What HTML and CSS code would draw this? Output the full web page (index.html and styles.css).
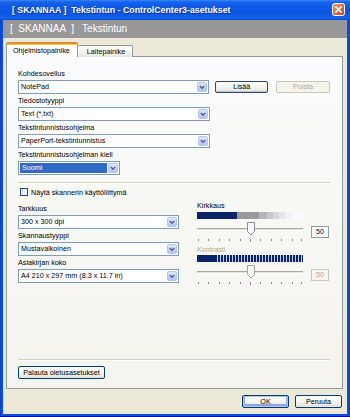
FILE: index.html
```html
<!DOCTYPE html>
<html>
<head>
<meta charset="utf-8">
<link rel="stylesheet" href="styles.css">
</head>
<body>
<div class="window">
  <div class="titlebar">
    <span class="title">[ SKANNAA ]  Tekstintun - ControlCenter3-asetukset</span>
    <span class="close"><svg width="13" height="13" viewBox="0 0 13 13"><defs><linearGradient id="cg" x1="0" y1="0" x2="1" y2="1"><stop offset="0" stop-color="#F0A585"/><stop offset="0.5" stop-color="#E06A3C"/><stop offset="1" stop-color="#C5461C"/></linearGradient></defs><rect x="0.5" y="0.5" width="12" height="12" rx="2" fill="url(#cg)" stroke="#fff"/><path d="M3.8 3.8 L9.2 9.2 M9.2 3.8 L3.8 9.2" stroke="#fff" stroke-width="1.7" stroke-linecap="round"/></svg></span>
  </div>
  <div class="client">
    <div class="header">[  SKANNAA  ]   Tekstintun</div>
    <div class="tabs">
      <div class="tab active">Ohjelmistopainike</div>
      <div class="tab">Laitepainike</div>
    </div>
    <div class="panel">
      <div class="field">
        <div class="label">Kohdesovellus</div>
        <div class="row">
          <div class="combo wide"><span class="value">NotePad</span><span class="arrow"><svg width="9" height="10" viewBox="0 0 9 10"><path d="M2 3.8 L4.5 6.3 L7 3.8" fill="none" stroke="#4D6185" stroke-width="1.6"/></svg></span></div>
          <button class="btn add">Lisää</button>
          <button class="btn del" disabled>Poista</button>
        </div>
      </div>
      <div class="field">
        <div class="label">Tiedostotyyppi</div>
        <div class="combo wide"><span class="value">Text (*.txt)</span><span class="arrow"><svg width="9" height="10" viewBox="0 0 9 10"><path d="M2 3.8 L4.5 6.3 L7 3.8" fill="none" stroke="#4D6185" stroke-width="1.6"/></svg></span></div>
      </div>
      <div class="field">
        <div class="label">Tekstintunnistusohjelma</div>
        <div class="combo wide"><span class="value">PaperPort-tekstintunnistus</span><span class="arrow"><svg width="9" height="10" viewBox="0 0 9 10"><path d="M2 3.8 L4.5 6.3 L7 3.8" fill="none" stroke="#4D6185" stroke-width="1.6"/></svg></span></div>
      </div>
      <div class="field">
        <div class="label">Tekstintunnistusohjelman kieli</div>
        <div class="combo lang"><span class="value selected">Suomi</span><span class="arrow"><svg width="9" height="10" viewBox="0 0 9 10"><path d="M2 3.8 L4.5 6.3 L7 3.8" fill="none" stroke="#4D6185" stroke-width="1.6"/></svg></span></div>
      </div>
      <div class="sep"></div>
      <div class="check"><span class="box"></span><span>Näytä skannerin käyttöliittymä</span></div>
      <div class="cols">
        <div class="left">
          <div class="field">
            <div class="label">Tarkkuus</div>
            <div class="combo mid"><span class="value">300 x 300 dpi</span><span class="arrow"><svg width="9" height="10" viewBox="0 0 9 10"><path d="M2 3.8 L4.5 6.3 L7 3.8" fill="none" stroke="#4D6185" stroke-width="1.6"/></svg></span></div>
          </div>
          <div class="field">
            <div class="label">Skannaustyyppi</div>
            <div class="combo mid"><span class="value">Mustavalkoinen</span><span class="arrow"><svg width="9" height="10" viewBox="0 0 9 10"><path d="M2 3.8 L4.5 6.3 L7 3.8" fill="none" stroke="#4D6185" stroke-width="1.6"/></svg></span></div>
          </div>
          <div class="field">
            <div class="label">Asiakirjan koko</div>
            <div class="combo mid"><span class="value">A4 210 x 297 mm (8.3 x 11.7 in)</span><span class="arrow"><svg width="9" height="10" viewBox="0 0 9 10"><path d="M2 3.8 L4.5 6.3 L7 3.8" fill="none" stroke="#4D6185" stroke-width="1.6"/></svg></span></div>
          </div>
        </div>
        <div class="right">
          <div class="slabel">Kirkkaus</div>
          <div class="bar bright"></div>
          <div class="srow">
            <svg class="slider" width="106" height="25" viewBox="0 0 106 25">
              <line x1="0" y1="9.5" x2="106" y2="9.5" stroke="#A7A6A0"/>
              <line x1="0" y1="10.5" x2="106" y2="10.5" stroke="#E2E1DA"/>
              <line x1="0" y1="11.5" x2="106" y2="11.5" stroke="#FFFFFF"/>
              <g fill="#8A8A8A">
                <rect x="1" y="20" width="1" height="2"/><rect x="11" y="20" width="1" height="2"/><rect x="22" y="20" width="1" height="2"/><rect x="32" y="20" width="1" height="2"/><rect x="43" y="20" width="1" height="2"/><rect x="53" y="20" width="1" height="3"/><rect x="63" y="20" width="1" height="2"/><rect x="74" y="20" width="1" height="2"/><rect x="84" y="20" width="1" height="2"/><rect x="95" y="20" width="1" height="2"/><rect x="104" y="20" width="1" height="2"/>
              </g>
              <path d="M50.5 3.5 H57.5 V12.5 L54 16 L50.5 12.5 Z" fill="#F7F7F3" stroke="#8E8F8F"/>
            </svg>
            <div class="valbox">50</div>
          </div>
          <div class="slabel disabled">Kontrasti</div>
          <div class="bar contrast"></div>
          <div class="srow">
            <svg class="slider" width="106" height="25" viewBox="0 0 106 25">
              <line x1="0" y1="9.5" x2="106" y2="9.5" stroke="#A7A6A0"/>
              <line x1="0" y1="10.5" x2="106" y2="10.5" stroke="#E2E1DA"/>
              <line x1="0" y1="11.5" x2="106" y2="11.5" stroke="#FFFFFF"/>
              <g fill="#8A8A8A">
                <rect x="1" y="20" width="1" height="2"/><rect x="11" y="20" width="1" height="2"/><rect x="22" y="20" width="1" height="2"/><rect x="32" y="20" width="1" height="2"/><rect x="43" y="20" width="1" height="2"/><rect x="53" y="20" width="1" height="3"/><rect x="63" y="20" width="1" height="2"/><rect x="74" y="20" width="1" height="2"/><rect x="84" y="20" width="1" height="2"/><rect x="95" y="20" width="1" height="2"/><rect x="104" y="20" width="1" height="2"/>
              </g>
              <path d="M50.5 3.5 H57.5 V12.5 L54 16 L50.5 12.5 Z" fill="#F7F7F3" stroke="#A3A39F"/>
            </svg>
            <div class="valbox disabled">50</div>
          </div>
        </div>
      </div>
      <div class="spacer"></div>
      <div class="sep"></div>
      <button class="btn reset">Palauta oletusasetukset</button>
    </div>
    <div class="footer">
      <button class="btn ok">OK</button>
      <button class="btn cancel">Peruuta</button>
    </div>
  </div>
</div>
</body>
</html>
```
FILE: styles.css
```css
* { box-sizing: border-box; }
html, body { margin: 0; padding: 0; }
body {
  width: 350px;
  height: 417px;
  overflow: hidden;
  font-family: "Liberation Sans", Arial, sans-serif;
  font-size: 7.2px;
  color: #000;
  background: #0B49D8;
}
.window {
  width: 350px;
  height: 417px;
  display: flex;
  flex-direction: column;
  background: linear-gradient(to right, #0A3FCC, #0C4FE0 2px, #0C4FE0 348px, #0A3FCC);
  border-bottom: 1px solid #00139A;
}
.titlebar {
  height: 20px;
  flex: none;
  display: flex;
  align-items: center;
  padding: 0 5px 0 12px;
  background: linear-gradient(to bottom, #3A86F4 0, #1563EC 2px, #0D58E6 7px, #0B55E3 13px, #1462EC 18px, #0B4FD8 20px);
  color: #fff;
}
.title {
  flex: 1;
  font-weight: bold;
  font-size: 8.8px;
  white-space: pre;
  text-shadow: 1px 1px 0 #0B2E9C;
}
.close { width: 13px; height: 13px; display: block; margin-top: -1px; }
.close svg { display: block; }
.client {
  flex: 1;
  margin: 0 3px 2px;
  background: #ECE9D8;
  display: flex;
  flex-direction: column;
}
.header {
  height: 18px;
  flex: none;
  background: #989898;
  color: #fff;
  font-size: 10px;
  line-height: 18px;
  padding-left: 7px;
  white-space: pre;
}
.tabs {
  display: flex;
  align-items: flex-end;
  height: 15px;
  margin: 4px 0 -1px 3px;
  position: relative;
  z-index: 1;
  flex: none;
}
.tab {
  height: 12px;
  width: 55px;
  border: 1px solid #919B9C;
  border-bottom: none;
  border-left: none;
  border-radius: 2px 2px 0 0;
  background: linear-gradient(#FFFFFF, #F3F3EF 60%, #E6E5DE);
  line-height: 11px;
  text-align: center;
  padding-left: 2px;
}
.tab.active {
  width: 72px;
  height: 15px;
  border-left: 1px solid #919B9C;
  border-top: 2px solid #E68B2C;
  box-shadow: inset 0 1px 0 #FFC83C;
  background: #FCFCFE;
  text-align: left;
  padding-left: 6px;
  line-height: 13px;
}
.panel {
  flex: 1;
  margin: 0 4px 0 3px;
  border: 1px solid #919B9C;
  background: linear-gradient(to bottom, #FCFCFE 0%, #F8F8F5 40%, #F4F3EE 100%);
  padding: 10px 12px 9px 11px;
  display: flex;
  flex-direction: column;
}
.label { height: 13px; line-height: 13px; white-space: nowrap; }
.row { display: flex; align-items: center; }
.combo {
  height: 14px;
  border: 1px solid #7F9DB9;
  background: #fff;
  display: flex;
  align-items: stretch;
  padding: 1px;
}
.combo.wide { width: 192px; }
.combo.lang { width: 102px; }
.combo.mid { width: 161px; }
.value {
  flex: 1;
  line-height: 10px;
  padding-left: 1px;
  white-space: nowrap;
  overflow: hidden;
}
.value.selected {
  background: #316AC5;
  color: #fff;
  margin-right: 1px;
  padding-left: 2px;
}
.arrow {
  width: 10px;
  border: 1px solid #B4C7F3;
  border-radius: 2px;
  background: linear-gradient(#E0E9FD, #C3D4FB 50%, #B2C6F5);
  display: flex;
  align-items: center;
  justify-content: center;
}
.arrow svg { display: block; }
.btn {
  font-family: inherit;
  font-size: 7.2px;
  height: 13px;
  padding: 0;
  border: 1px solid #003C74;
  border-radius: 2px;
  background: linear-gradient(#FFFFFF, #F4F4F0 50%, #E3E1D8);
  color: #000;
  line-height: 10px;
}
.btn.add { width: 53px; height: 12px; margin-left: 6px; border-color: #2D4A6E; box-shadow: inset 0 -1px 0 #B9C7D9; }
.btn.del { width: 54px; height: 12px; margin-left: 8px; border-color: #C9C7BA; background: #F5F4EA; color: #ACA899; }
.sep {
  height: 2px;
  border-top: 1px solid #D0D0BF;
  border-bottom: 1px solid #FFFFFF;
  margin-top: 7px;
  flex: none;
}
.check {
  display: flex;
  align-items: center;
  height: 10px;
  margin-top: 3px;
  padding-left: 2px;
  gap: 3px;
}
.box {
  width: 8px;
  height: 8px;
  border: 1px solid #1C5180;
  background: linear-gradient(135deg, #DCDCD5, #FFFFFF);
}
.cols {
  display: flex;
  gap: 18px;
  margin-top: 5px;
}
.left { width: 161px; }
.right { width: 133px; margin-top: -2px; }
.slabel { height: 11px; line-height: 11px; }
.slabel.disabled { color: #ACA899; }
.bar { width: 106px; height: 7px; margin-top: 1px; }
.bar.bright {
  background: linear-gradient(to right, #0A246A 0 40px, #9A9A9A 40px 62px, #B6B6B6 62px 70px, #C8C8C8 70px 76px, #D8D8D8 76px 82px, #E6E6E6 82px 88px, #F2F2F2 88px 96px, #FBFBFB 96px);
}
.bar.contrast {
  margin-top: 0;
  background: linear-gradient(to right, #0A246A 0 20px, transparent 20px), repeating-linear-gradient(to right, #0A246A 0 2px, #CDD2E2 2px 3px);
}
.srow { display: flex; height: 25px; }
.slider { display: block; flex: none; }
.valbox {
  width: 18px;
  height: 12px;
  margin: 7px 0 0 8px;
  border: 1px solid #8E9AA6;
  background: #fff;
  text-align: center;
  line-height: 10px;
}
.valbox.disabled { border-color: #C9C7BA; color: #ACA899; background: #F6F5F0; }
.spacer { flex: 1; }
.btn.reset { width: 87px; margin-top: 5px; align-self: flex-start; }
.footer {
  height: 25px;
  flex: none;
  display: flex;
  justify-content: flex-end;
  gap: 6px;
  padding: 6px 5px 0 0;
}
.btn.ok { width: 47px; box-shadow: inset 0 0 0 1px #B0C6F2, inset 0 -1px 0 2px #8EA8E4; }
.btn.cancel { width: 47px; }
```
